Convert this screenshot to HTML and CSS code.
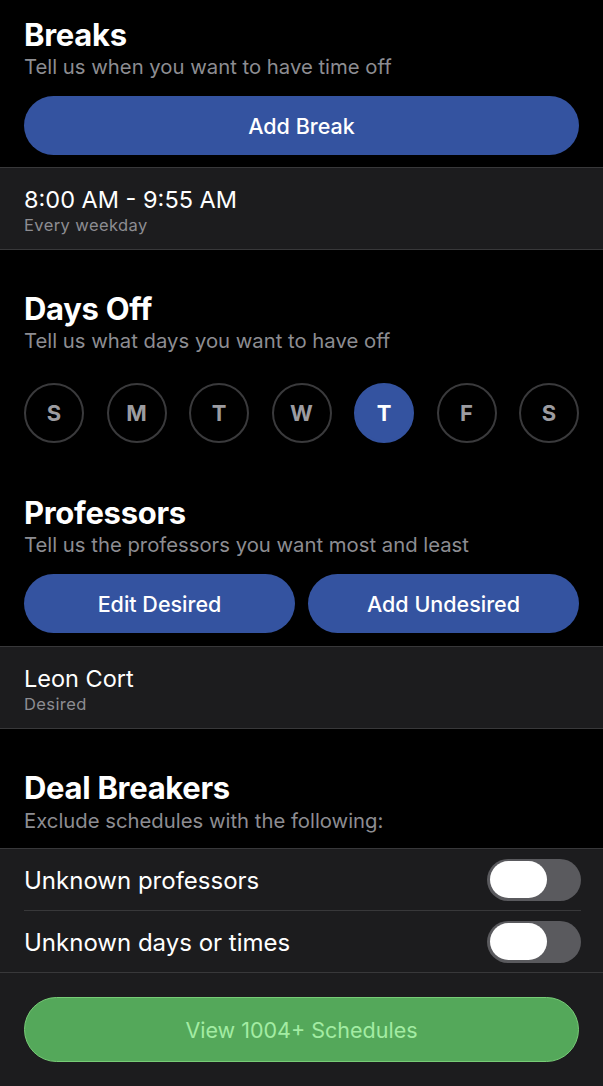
FILE: index.html
```html
<!DOCTYPE html>
<html lang="en">
<head>
  <meta charset="UTF-8">
  <meta name="viewport" content="width=device-width, initial-scale=1.0">
  <title>Preferences</title>
  <link rel="stylesheet" href="styles.css">
</head>
<body>
  <div class="section breaks">
    <h2>Breaks</h2>
    <p class="sub">Tell us when you want to have time off</p>
    <button class="btn full">Add Break</button>
  </div>
  <div class="row">
    <div class="row-title">8:00 AM - 9:55 AM</div>
    <div class="row-sub">Every weekday</div>
  </div>

  <div class="section days-off">
    <h2>Days Off</h2>
    <p class="sub">Tell us what days you want to have off</p>
    <div class="days">
      <span class="day">S</span>
      <span class="day">M</span>
      <span class="day">T</span>
      <span class="day">W</span>
      <span class="day on">T</span>
      <span class="day">F</span>
      <span class="day">S</span>
    </div>
  </div>

  <div class="section profs">
    <h2>Professors</h2>
    <p class="sub">Tell us the professors you want most and least</p>
    <div class="btn-pair">
      <button class="btn">Edit Desired</button>
      <button class="btn">Add Undesired</button>
    </div>
  </div>
  <div class="row">
    <div class="row-title">Leon Cort</div>
    <div class="row-sub">Desired</div>
  </div>

  <div class="section deal">
    <h2>Deal Breakers</h2>
    <p class="sub">Exclude schedules with the following:</p>
  </div>
  <div class="list">
    <div class="toggle-row">
      <span class="label">Unknown professors</span>
      <span class="switch"><span class="knob"></span></span>
    </div>
    <div class="toggle-row">
      <span class="label">Unknown days or times</span>
      <span class="switch"><span class="knob"></span></span>
    </div>
  </div>
  <div class="footer">
    <button class="btn-go">View 1004+ Schedules</button>
  </div>
</body>
</html>
```

FILE: styles.css
```css
body { margin: 0; background: #000; color: #fff; font-family: Inter, "Noto Sans", sans-serif; }
h2 { margin: 0; font-size: 31px; line-height: 37px; font-weight: 700; letter-spacing: -0.3px; }
.sub { margin: 0; font-size: 20.3px; line-height: 28px; color: #8d8d92; }
.section { padding: 0 24px; }
.breaks { padding-top: 16px; padding-bottom: 12px; }
.btn { display: block; height: 59px; border: none; border-radius: 30px; background: #3453a0; color: #fff; font-family: inherit; font-size: 21.5px; font-weight: 500; }
.btn.full { width: 100%; margin-top: 15px; }
.row { background: #1c1c1e; border-top: 1px solid #38383a; border-bottom: 1px solid #38383a; padding: 18px 24px 13px; height: 50px; }
.row-title { font-size: 23.5px; line-height: 28px; }
.row-sub { font-size: 16.5px; line-height: 20px; margin-top: 1px; color: #8d8d92; letter-spacing: 0.4px; }
.days-off { padding-top: 40px; }
.days { display: flex; justify-content: space-between; margin-top: 28px; }
.day { width: 56px; height: 56px; border: 2px solid #3a3a3c; border-radius: 50%; display: flex; align-items: center; justify-content: center; font-size: 22px; font-weight: 700; color: #9c9ca1; }
.day.on { background: #3453a0; border-color: #3453a0; color: #fff; }
.profs { padding-top: 51px; padding-bottom: 13px; }
.btn-pair { display: flex; gap: 13px; margin-top: 15px; }
.btn-pair .btn { flex: 1; }
.deal { padding-top: 40px; padding-bottom: 13px; }
.deal .sub { margin-top: 1px; }
.list { background: #1c1c1e; border-top: 1px solid #38383a; border-bottom: 1px solid #38383a; padding: 0 22px 0 24px; }
.toggle-row { display: flex; align-items: center; justify-content: space-between; height: 61px; font-size: 24px; }
.toggle-row + .toggle-row { border-top: 1px solid #38383a; }
.label { padding-top: 2px; }
.switch { width: 94px; height: 42px; border-radius: 21px; background: #5a5a5e; display: flex; align-items: center; padding-left: 3px; box-sizing: border-box; }
.knob { width: 57px; height: 37px; border-radius: 19px; background: #fff; }
.footer { background: #1c1c1e; padding: 24px 24px 30px; }
.btn-go { width: 100%; height: 65px; border-radius: 33px; border: 1.5px solid #77cc77; background: #54a85a; color: #a3eca3; font-family: inherit; font-size: 21.5px; }
```
